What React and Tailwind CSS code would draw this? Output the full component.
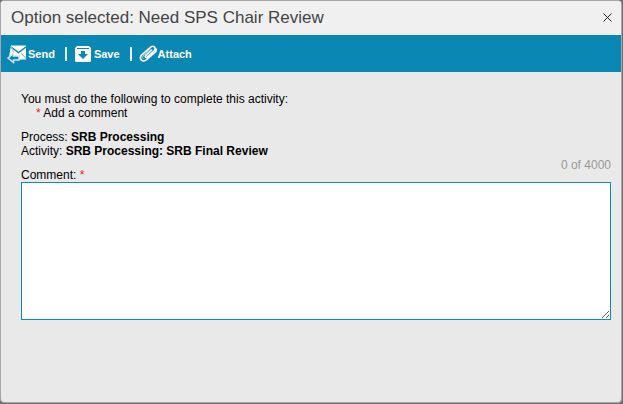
/**
 * Activity Dialog
 * Collects the comment that is required before an activity can be completed
 */
import React, { useState } from 'react';

const MAX_LENGTH = 4000;

function SendIcon() {
  return (
    <svg width="21" height="20" viewBox="0 0 21 20" fill="none" aria-hidden="true">
      <path d="M4 1.5H19V15.5H6L2 13Z" fill="#fff" />
      <path d="M4 3L11.5 8.5L19 3" stroke="#0b87b4" strokeWidth="1.5" />
      <path d="M19 14.5L14.5 9.5" stroke="#5fb0cd" strokeWidth="1" />
      <path d="M4 2L6.5 8.5" stroke="#8cc5da" strokeWidth="1" />
      <path d="M1 14L6.5 9.5V12H12V16H6.5V18.5Z" fill="#0b87b4" stroke="#cfe8f1" strokeWidth="1.5" />
    </svg>
  );
}

function SaveIcon() {
  return (
    <svg width="16" height="16" viewBox="0 0 16 16" fill="none" aria-hidden="true">
      <path d="M2 0H14L16 2V14.5Q16 16 14.5 16H1.5Q0 16 0 14.5V2Z" fill="#fff" />
      <path d="M2 2.5H14" stroke="#0b87b4" strokeWidth="1" />
      <path d="M6 5H10V8H13L8 13L3 8H6Z" fill="#0b87b4" />
    </svg>
  );
}

function AttachIcon() {
  return (
    <svg width="19" height="17" viewBox="0 0 19 17" fill="none" aria-hidden="true">
      <path
        d="M12.6 5L6.8 10.3C5.4 11.7 6.9 13.2 8.4 11.9L14.9 6C17.8 3.2 14.6 -0.4 11.4 2.3L2.8 9.8C-0.9 13.4 3.6 18 7.6 14.7L16.4 6.9Q17.6 5.6 17.2 4"
        stroke="#fff"
        strokeWidth="1.6"
        strokeLinecap="round"
      />
      <path d="M11.6 4L4.8 10C3.2 11.6 3.4 12.8 4.4 13.6" stroke="#b5dbe8" strokeWidth="1" />
    </svg>
  );
}

function ToolbarButton({ icon, label, className = '' }) {
  return (
    <button type="button" className={`flex items-center text-[11px] leading-4 font-bold text-white ${className}`}>
      {icon}
      {label}
    </button>
  );
}

function Separator() {
  return <span className="h-[14px] w-[2px] bg-[#e4f2f7]" />;
}

function App() {
  const [comment, setComment] = useState('');

  return (
    <div className="flex min-h-screen bg-[#6e6e6e] pr-px pb-px font-['Liberation_Sans',Arial,sans-serif] text-xs leading-[14px] text-black">
      <div role="dialog" aria-labelledby="dialog-title" className="flex-1 overflow-hidden rounded-[4px] border border-[#a6a6a6] bg-[#e9e9e9]">
        <header className="flex h-[34px] items-center justify-between border-b border-white bg-[#f0f0f0] pr-[9px] pl-[10px]">
          <h1 id="dialog-title" className="text-[17px] leading-5 text-[#444]">
            Option selected: Need SPS Chair Review
          </h1>
          <button type="button" aria-label="Close">
            <svg width="9" height="9" viewBox="0 0 9 9" aria-hidden="true">
              <path d="M0.5 0.5L8.5 8.5M8.5 0.5L0.5 8.5" stroke="#222" strokeWidth="1" />
            </svg>
          </button>
        </header>

        {/* Toolbar */}
        <div className="flex h-[37px] items-center bg-[#0b87b4] pl-[6px]">
          <ToolbarButton icon={<SendIcon />} label="Send" />
          <div className="flex items-center gap-2 pl-[10px]">
            <Separator />
            <ToolbarButton icon={<SaveIcon />} label="Save" className="gap-[3px]" />
          </div>
          <div className="flex items-center gap-[7px] pl-[10px]">
            <Separator />
            <ToolbarButton icon={<AttachIcon />} label="Attach" />
          </div>
        </div>

        <main className="pt-5 pr-[10px] pb-5 pl-5">
          <p>You must do the following to complete this activity:</p>
          <p className="pl-[15px]">
            <span className="text-[#e8202a]">*</span> Add a comment
          </p>

          <p className="mt-[10px]">
            Process: <b>SRB Processing</b>
          </p>
          <p>
            Activity: <b>SRB Processing: SRB Final Review</b>
          </p>

          <div className="flex items-start justify-between">
            <label htmlFor="comment" className="pt-[10px]">
              Comment: <span className="text-[#e8202a]">*</span>
            </label>
            <span className="text-[#999]">
              {comment.length} of {MAX_LENGTH}
            </span>
          </div>
          <textarea
            id="comment"
            required
            maxLength={MAX_LENGTH}
            value={comment}
            onChange={(e) => setComment(e.target.value)}
            className="block h-[138px] w-full resize border border-[#0b8fb8] bg-white p-1 outline-none"
          />
        </main>
      </div>
    </div>
  );
}

export default App;
